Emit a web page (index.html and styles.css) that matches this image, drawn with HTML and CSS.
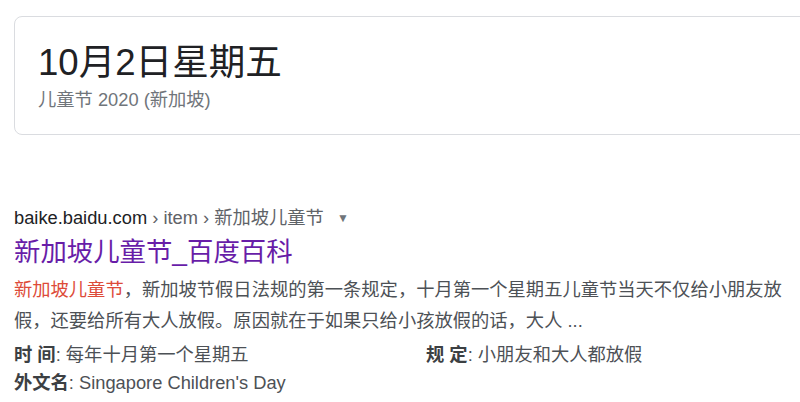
FILE: index.html
```html
<!DOCTYPE html>
<html lang="zh-CN">
  <head>
    <meta charset="UTF-8" />
    <title>新加坡儿童节</title>
    <link rel="stylesheet" href="styles.css">
  </head>
  <body>
    <div class="answer-card">
      <div class="answer-date">10月2日星期五</div>
      <div class="answer-sub">儿童节 2020 (新加坡)</div>
    </div>

    <div class="result">
      <div class="crumbs">
        <span class="host">baike.baidu.com</span>
        <span class="path"> › item › 新加坡儿童节</span>
        <span class="caret">▼</span>
      </div>
      <a class="result-title" href="#">新加坡儿童节_百度百科</a>
      <div class="snippet"><span class="hit">新加坡儿童节</span>，新加坡节假日法规的第一条规定，十月第一个星期五儿童节当天不仅给小朋友放假，还要给所有大人放假。原因就在于如果只给小孩放假的话，大人 ...</div>
      <div class="facts">
        <div class="fact"><b>时 间</b>: 每年十月第一个星期五</div>
        <div class="fact"><b>规 定</b>: 小朋友和大人都放假</div>
        <div class="fact"><b>外文名</b>: Singapore Children's Day</div>
      </div>
    </div>
  </body>
</html>
```

FILE: styles.css
```css
html,
body {
  overflow: hidden;
}

body {
  margin: 0;
  padding: 16px 0 0 14px;
  background-color: #fff;
  font-family: "Liberation Sans", Arial, "Noto Sans CJK SC", sans-serif;
  color: #4d5156;
}

.answer-card {
  width: 840px;
  border: 1px solid #dadce0;
  border-radius: 8px;
  padding: 24px 0 19px 23px;
}

.answer-date {
  font-size: 36.6px;
  line-height: 44px;
  color: #202124;
}

.answer-sub {
  font-size: 18.3px;
  line-height: 30px;
  color: #70757a;
}

.result {
  margin-top: 69px;
  width: 784px;
}

.crumbs {
  font-size: 18.3px;
  line-height: 28px;
  color: #5f6368;
  white-space: nowrap;
}

.host {
  color: #202124;
}

.caret {
  font-size: 12px;
  margin-left: 8px;
  color: #70757a;
  vertical-align: 2px;
}

.result-title {
  display: block;
  font-size: 26.4px;
  line-height: 40px;
  color: #681da8;
  text-decoration: none;
}

.snippet {
  font-size: 18.3px;
  line-height: 31px;
  margin-top: 2px;
}

.hit {
  color: #dd4b39;
}

.facts {
  display: grid;
  grid-template-columns: 412px 1fr;
  margin-top: 5px;
  font-size: 18.3px;
  line-height: 28px;
}

.fact b {
  color: #3c4043;
}
```
